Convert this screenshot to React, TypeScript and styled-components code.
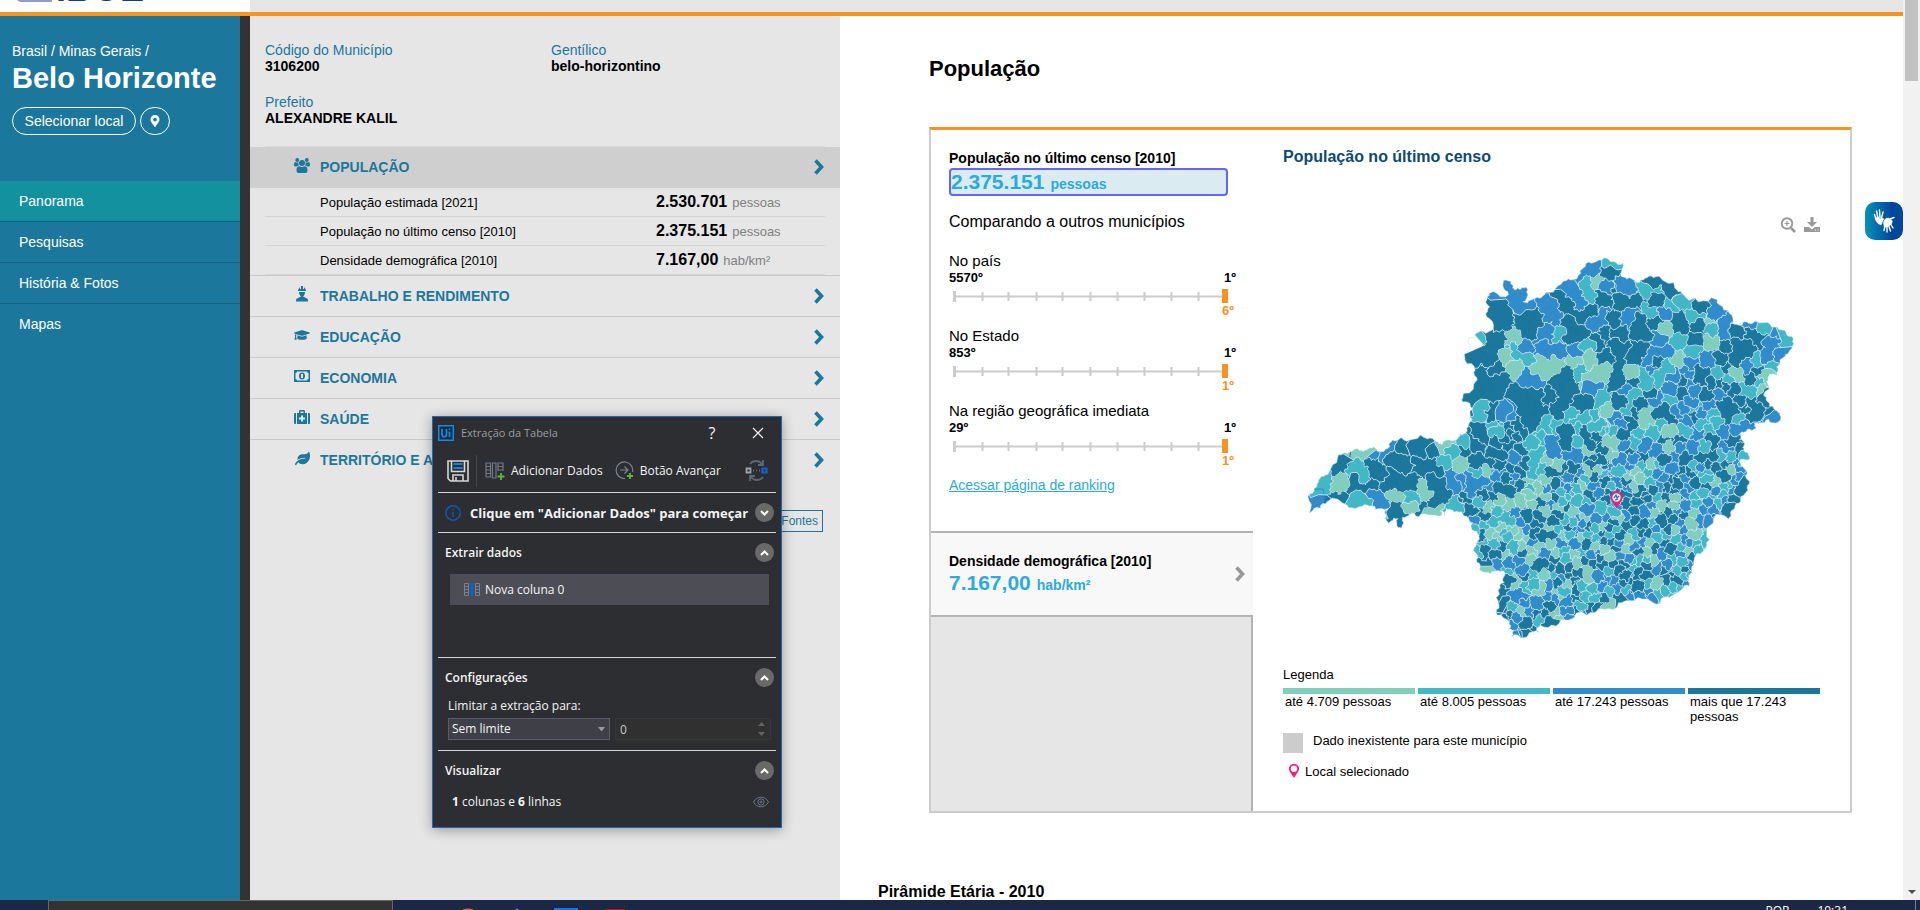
import React from "react";
import styled, { createGlobalStyle } from "styled-components";
import { FaGraduationCap, FaLeaf, FaMapMarkerAlt } from "react-icons/fa";

const GlobalStyle = createGlobalStyle`
  *, *::before, *::after { box-sizing: border-box; }
  body { margin: 0; font-family: "Liberation Sans", Arial, sans-serif; font-size: 14px; color: #000; background: #fff; }
  button, input, select { font: inherit; color: inherit; margin: 0; }
  h1, h2, h3, p, ul, dl, dd { margin: 0; padding: 0; }
  ul { list-style: none; }
  svg { display: block; flex: none; }
`;

const teal = "#1c779d";
const orange = "#f7931e";
const sky = "#29abe2";
const classColors = ["#80cebb", "#42b7c5", "#308cca", "#1c779d"];

/* ---------- Page frame ---------- */

const Screen = styled.div`
  display: flex;
  flex-direction: column;
  height: 100vh;
  overflow: hidden;
`;
const Viewport = styled.div`
  display: flex;
  flex: 1;
  min-height: 0;
`;
const Page = styled.div`
  position: relative;
  display: flex;
  flex: 1;
  flex-direction: column;
  min-width: 0;
`;
const TopBar = styled.header`
  display: flex;
  height: 16px;
  flex: none;
  background: #e6e6e6;
  border-bottom: 4px solid ${orange};
`;
const LogoBox = styled.div`
  display: flex;
  align-items: flex-end;
  gap: 4px;
  width: 250px;
  height: 12px;
  padding: 0 0 10px 17px;
  overflow: hidden;
  background: #fff;
`;
const LogoText = styled.span`
  font-size: 36px;
  line-height: 26px;
  font-weight: bold;
  color: #0b4182;
`;
const Columns = styled.div`
  display: flex;
  flex: 1;
  min-height: 0;
`;

/* ---------- Sidebar ---------- */

const Sidebar = styled.nav`
  width: 250px;
  flex: none;
  padding-top: 26px;
  color: #fff;
  background: ${teal};
  border-right: 10px solid #333;
`;
const Place = styled.div`
  padding: 0 12px;
  margin-bottom: 46px;
`;
const Crumbs = styled.p`
  line-height: 18px;
`;
const City = styled.h1`
  font-size: 29px;
  line-height: 36px;
  white-space: nowrap;
`;
const PlaceActions = styled.div`
  display: flex;
  gap: 4px;
  margin-top: 11px;
`;
const PillButton = styled.button<{ $round?: boolean }>`
  display: flex;
  align-items: center;
  justify-content: center;
  width: ${(p) => (p.$round ? "30px" : "124px")};
  height: 28px;
  padding: 0;
  color: #fff;
  white-space: nowrap;
  background: none;
  border: 1px solid #fff;
  border-radius: 14px;
`;
const MenuLink = styled.a<{ $active?: boolean }>`
  display: block;
  height: 41px;
  padding-left: 19px;
  line-height: 40px;
  color: #fff;
  text-decoration: none;
  background: ${(p) => (p.$active ? "#14919f" : "transparent")};
  border-bottom: 1px solid ${(p) => (p.$active ? "#125c7c" : "#155f80")};
  li:last-child > & { border-bottom: 0; }
`;

/* ---------- Indicator panel ---------- */

const Panel = styled.section`
  position: relative;
  width: 590px;
  flex: none;
  background: #e6e6e6;
`;
const Facts = styled.dl`
  display: grid;
  grid-template-columns: 286px 1fr;
  row-gap: 20px;
  margin: 0 15px;
  padding: 26px 0 20px;
  line-height: 16px;
  border-bottom: 1px solid #d9d9d9;
  dt { color: ${teal}; }
  dd { font-weight: bold; }
`;
const ThemeButton = styled.button<{ $open?: boolean; $last?: boolean }>`
  display: flex;
  align-items: center;
  width: 100%;
  height: 41px;
  padding: 0 16px 0 44px;
  font-weight: bold;
  text-align: left;
  color: ${teal};
  background: ${(p) => (p.$open ? "#cfcfcf" : "transparent")};
  border: 0;
  border-bottom: 1px solid ${(p) => (p.$open ? "#cfcfcf" : p.$last ? "transparent" : "#cacaca")};
`;
const ThemeIcon = styled.span`
  display: flex;
  width: 16px;
  margin-right: 10px;
  margin-bottom: 4px;
  justify-content: center;
`;
const ThemeName = styled.span`
  flex: 1;
`;
const Details = styled.ul`
  padding: 0 15px;
  border-bottom: 1px solid #cacaca;
`;
const DetailRow = styled.li`
  display: flex;
  align-items: center;
  height: 29px;
  padding-left: 55px;
  font-size: 13px;
  border-bottom: 1px solid #d4d4d4;
`;
const DetailName = styled.span`
  width: 336px;
`;
const DetailValue = styled.span`
  display: flex;
  align-items: baseline;
  gap: 5px;
  color: #808080;
  b { font-size: 16px; color: #000; }
`;
const SourceRow = styled.div`
  display: flex;
  justify-content: flex-end;
  padding: 29px 17px 0;
`;
const SourceButton = styled.button`
  height: 22px;
  padding: 0 4px 0 20px;
  font-size: 12px;
  color: ${teal};
  background: none;
  border: 1px solid ${teal};
`;

/* ---------- Main content ---------- */

const Main = styled.main`
  flex: 1;
  min-width: 0;
  padding: 40px 51px 0 38px;
  overflow: hidden;
  background: #fff;
`;
const SectionTitle = styled.h2`
  margin-left: 51px;
  font-size: 22px;
  line-height: 26px;
`;
const NextTitle = styled.h2`
  margin-top: 69px;
  font-size: 16px;
  line-height: 20px;
`;
const Card = styled.section`
  display: flex;
  margin: 45px 0 0 51px;
  border: 2px solid #ccc;
  border-top: 3px solid ${orange};
`;
const CardSide = styled.div`
  display: flex;
  flex-direction: column;
  width: 322px;
  flex: none;
`;
const Indicator = styled.div`
  padding: 19px 17px 39px 18px;
`;
const IndicatorName = styled.h3`
  font-size: 14px;
  line-height: 19px;
`;
const Amount = styled.p<{ $picked?: boolean }>`
  display: flex;
  align-items: baseline;
  gap: 6px;
  width: 279px;
  height: ${(p) => (p.$picked ? "28px" : "24px")};
  font-size: 14px;
  font-weight: bold;
  line-height: 24px;
  color: ${sky};
  background: ${(p) => (p.$picked ? "#dbebf2" : "transparent")};
  border: ${(p) => (p.$picked ? "2px solid #6565f8" : "0")};
  border-radius: 4px;
  b { font-size: 21px; line-height: 24px; }
`;
const Compare = styled.p`
  margin: 16px 0 20px;
  font-size: 16px;
  line-height: 20px;
`;
const Ranking = styled.div`
  margin-bottom: 9px;
  font-size: 13px;
`;
const RankingName = styled.p`
  font-size: 15px;
  line-height: 18px;
`;
const RankingEnds = styled.p`
  display: flex;
  justify-content: space-between;
  font-weight: bold;
  line-height: 16px;
`;
const RankingSpot = styled.p`
  padding: 1px 2px 0 0;
  text-align: right;
  font-weight: bold;
  line-height: 14px;
  color: ${orange};
`;
const RankingLink = styled.a`
  display: block;
  padding-top: 1px;
  line-height: 14px;
  color: ${sky};
`;
const OtherIndicator = styled.button`
  display: flex;
  align-items: center;
  justify-content: space-between;
  padding: 19px 8px 20px 18px;
  text-align: left;
  background: #f8f8f8;
  border: solid #b3b3b3;
  border-width: 2px 0;
`;
const OtherName = styled.span`
  display: block;
  font-weight: bold;
  line-height: 19px;
`;
const SideFill = styled.div`
  flex: 1;
  background: #e6e6e6;
  border-right: 2px solid #b3b3b3;
`;
const MapSide = styled.div`
  flex: 1;
  min-width: 0;
  padding: 18px 30px 31px;
`;
const MapTitle = styled.h3`
  font-size: 16px;
  line-height: 18px;
  color: #0d4a6f;
`;
const MapTools = styled.div`
  display: flex;
  justify-content: flex-end;
  gap: 8px;
  margin: 50px 0 16px;
`;
const ToolButton = styled.button`
  display: flex;
  align-items: center;
  justify-content: center;
  width: 16px;
  height: 18px;
  padding: 0;
  background: none;
  border: 0;
`;
const MapHolder = styled.div`
  padding-left: 17px;
`;
const Legend = styled.div`
  margin-top: 17px;
  font-size: 13px;
  line-height: 15px;
`;
const LegendScale = styled.ul`
  display: grid;
  grid-template-columns: repeat(4, 1fr);
  gap: 3px;
  margin: 6px 0 9px;
`;
const LegendClass = styled.li<{ $color: string }>`
  padding-left: 2px;
  border-top: 6px solid ${(p) => p.$color};
`;
const LegendLine = styled.p`
  display: flex;
  gap: 10px;
  min-height: 20px;
  margin-bottom: 9px;
`;
const LegendPin = styled.p`
  display: flex;
  align-items: center;
  gap: 6px;
  height: 18px;
  padding-left: 6px;
`;
const Swatch = styled.span`
  width: 20px;
  height: 20px;
  background: #ccc;
`;
const SignButton = styled.button`
  position: absolute;
  top: 202px;
  right: 0;
  display: flex;
  align-items: center;
  justify-content: center;
  width: 38px;
  height: 38px;
  padding: 0;
  border: 0;
  border-radius: 10px;
  background: linear-gradient(90deg, #0692b8, #00479b 70%);
`;

/* ---------- Browser scroll bar and task bar ---------- */

const ScrollBar = styled.div`
  display: flex;
  flex-direction: column;
  align-items: center;
  justify-content: space-between;
  width: 17px;
  flex: none;
  padding-bottom: 6px;
  background: #f1f1f1;
`;
const Thumb = styled.div`
  width: 13px;
  height: 81px;
  background: #c1c1c1;
`;
const TaskBar = styled.footer`
  display: flex;
  height: 10px;
  flex: none;
  overflow: hidden;
  color: #fff;
  background: #1a2745;
`;
const SearchBox = styled.div`
  width: 345px;
  margin-left: 48px;
  background: #333;
  border: 1px solid #666;
  border-bottom: 0;
`;
const TaskIcons = styled.div`
  flex: 1;
  padding-left: 67px;
`;
const Tray = styled.div`
  display: flex;
  gap: 28px;
  padding: 5px 67px 0 0;
  font: 12px/12px "Open Sans", "Noto Sans", sans-serif;
`;
const DesktopEdge = styled.div`
  width: 5px;
  border-left: 1px solid #77809a;
`;

/* ---------- Extraction dialog ---------- */

const Dialog = styled.section`
  position: absolute;
  top: 400px;
  left: 182px;
  z-index: 2;
  width: 350px;
  padding: 0 5px;
  font: 12px/16px "Open Sans", "Noto Sans", sans-serif;
  color: #f4f4f4;
  background: #2d2e32;
  border: 1px solid #1b69b8;
  box-shadow: 0 2px 12px rgba(0, 0, 0, 0.35);
`;
const DialogBar = styled.header`
  display: flex;
  align-items: center;
  height: 32px;
  margin-right: -5px;
  color: #9c9ca0;
`;
const DialogTitle = styled.span`
  flex: 1;
  padding-left: 7px;
  font-size: 11px;
`;
const PlainButton = styled.button<{ $width?: number }>`
  display: flex;
  align-items: center;
  justify-content: center;
  gap: 6px;
  width: ${(p) => (p.$width ? `${p.$width}px` : "auto")};
  height: 30px;
  padding: 0;
  white-space: nowrap;
  color: #f4f4f4;
  background: none;
  border: 0;
`;
const HelpButton = styled(PlainButton)`
  font-size: 16px;
`;
const DialogTools = styled.div`
  display: flex;
  align-items: center;
  height: 43px;
  padding: 0 8px 0 9px;
`;
const ToolDivider = styled.span`
  width: 1px;
  height: 32px;
  margin: 0 8px 0 7px;
  background: #45464b;
`;
const ToolSpacer = styled.span<{ $grow?: boolean }>`
  flex: ${(p) => (p.$grow ? "1" : "none")};
  width: 12px;
`;
const Block = styled.div<{ $height: number }>`
  min-height: ${(p) => p.$height}px;
  border-top: 1px solid #d4d4d4;
`;
const BlockHead = styled.div`
  display: flex;
  align-items: center;
  justify-content: space-between;
  height: 39px;
  padding: 0 2px 0 7px;
`;
const BlockTitle = styled.h3`
  font-size: 12px;
  font-weight: 600;
`;
const HintTitle = styled.h3`
  flex: 1;
  padding-left: 9px;
  font-size: 13px;
  font-weight: 700;
  white-space: nowrap;
`;
const FoldButton = styled.button`
  display: flex;
  align-items: center;
  justify-content: center;
  width: 19px;
  height: 19px;
  padding: 0;
  background: #696969;
  border: 0;
  border-radius: 50%;
`;
const ColumnItem = styled.div`
  display: flex;
  align-items: center;
  gap: 5px;
  height: 31px;
  margin: 2px 7px 0 12px;
  padding-left: 14px;
  background: #4d4d56;
`;
const LimitLabel = styled.label`
  display: block;
  margin: 1px 0 4px 10px;
`;
const LimitRow = styled.div`
  display: flex;
  gap: 5px;
  padding: 0 5px 0 10px;
`;
const SelectBox = styled.div`
  display: grid;
  align-items: center;
  width: 162px;
  > * { grid-area: 1 / 1; }
  > svg { justify-self: end; margin-right: 5px; pointer-events: none; }
`;
const Select = styled.select`
  width: 100%;
  height: 22px;
  padding: 0 3px;
  line-height: 16px;
  color: #f4f4f4;
  appearance: none;
  background: #3f4047;
  border: 1px solid #5c5d63;
  border-radius: 0;
`;
const SpinBox = styled.div`
  display: grid;
  align-items: center;
  flex: 1;
  > * { grid-area: 1 / 1; }
  > svg { justify-self: end; margin-right: 6px; }
`;
const SpinInput = styled.input`
  width: 100%;
  height: 22px;
  padding: 0 4px;
  color: #c8c8c8;
  background: #303030;
  border: 1px solid #36373a;
`;
const Preview = styled.div`
  display: flex;
  align-items: center;
  justify-content: space-between;
  height: 24px;
  padding: 0 7px 0 14px;
`;

/* ---------- Municipality map ---------- */

type Pt = [number, number];

/* The map is stored on two sheets, each with its own scale. */
const north = (x: number, y: number): Pt => [x / 2.412 - 30, y / 3 - 130];
const south = (x: number, y: number): Pt => [x / 2.8 - 10, y / 3 + 150];

const pairs = (flat: number[], to: (x: number, y: number) => Pt): Pt[] => {
  const out: Pt[] = [];
  for (let i = 0; i < flat.length; i += 2) out.push(to(flat[i], flat[i + 1]));
  return out;
};

const stateOutline: Pt[] = [
  ...pairs(
    [480, 910, 483, 885, 482, 850, 462, 840, 468, 820, 500, 780, 495, 750, 470, 720, 470, 700, 483, 678, 480, 655, 495, 642, 520, 640, 538, 628, 523, 590, 530, 560, 525, 530, 530, 520, 565, 530, 575, 525, 566, 510, 563, 485, 572, 482, 585, 495, 590, 510, 605, 508, 620, 505, 622, 525, 610, 545, 630, 540, 650, 535, 665, 518, 695, 497, 705, 487, 725, 480, 750, 460, 755, 445, 775, 430, 800, 420, 830, 425, 852, 430, 846, 465, 860, 477, 885, 488, 905, 475, 925, 473, 950, 483, 985, 515, 1000, 528, 1025, 535, 1065, 533, 1085, 555, 1108, 580, 1111, 612, 1130, 615, 1145, 605, 1165, 610, 1185, 608, 1210, 622, 1235, 630, 1245, 642, 1262, 655, 1264, 670, 1250, 700, 1240, 710, 1230, 725, 1222, 740, 1222, 765, 1205, 762, 1198, 785, 1190, 825, 1200, 845, 1215, 865, 1230, 880, 1232, 895],
    north
  ),
  ...pairs(
    [1368, 65, 1340, 58, 1315, 68, 1300, 70, 1305, 85, 1280, 88, 1265, 95, 1258, 120, 1272, 135, 1270, 150, 1283, 160, 1283, 180, 1260, 180, 1268, 200, 1280, 215, 1282, 240, 1280, 262, 1262, 290, 1252, 310, 1245, 325, 1235, 345, 1228, 357, 1185, 357, 1178, 375, 1175, 420, 1165, 440, 1155, 455, 1140, 460, 1130, 485, 1125, 515, 1115, 540, 1118, 558, 1095, 570, 1050, 590, 1015, 607, 1000, 597, 950, 603, 920, 608, 880, 628, 830, 645, 780, 660, 745, 678, 700, 675, 690, 690, 698, 700, 665, 708, 655, 713, 620, 710, 635, 690, 612, 688, 615, 665, 580, 645, 585, 615, 583, 570, 600, 548, 603, 520, 575, 513, 545, 517, 530, 490, 525, 465, 515, 445, 528, 420, 530, 405, 510, 390, 512, 368, 500, 355, 480, 335, 455, 330, 437, 325, 433, 348, 425, 330, 418, 348, 400, 345, 360, 350, 335, 345, 315, 352, 312, 385, 303, 383, 303, 355, 290, 355, 275, 370, 265, 355, 265, 335, 275, 325, 240, 328, 215, 315, 190, 322, 160, 315, 105, 305, 85, 325, 55, 338, 50, 290, 68, 265, 75, 260, 80, 240, 100, 225, 115, 205, 135, 165, 170, 155, 195, 152, 215, 150, 235, 140, 248, 155, 275, 145, 278, 130, 300, 122, 312, 113, 345, 118, 385, 117, 410, 125, 425, 135, 465, 120, 475, 103, 495, 95, 500, 75],
    south
  ),
];

/* Large municipalities: class, then the points that span each one. */
const northAreas: number[][] = [
  [3, 545, 550, 555, 580, 560, 605], [2, 595, 530, 615, 550, 575, 505], [3, 615, 590, 640, 595, 625, 635, 612, 615],
  [1, 500, 655], [3, 545, 650, 540, 690, 500, 700, 535, 725], [0, 588, 655], [1, 590, 697, 612, 712], [2, 615, 685],
  [2, 665, 640, 655, 660], [1, 703, 650], [2, 672, 555, 685, 590], [3, 695, 520, 715, 560, 745, 590, 775, 580],
  [2, 725, 500, 745, 550, 735, 520], [3, 725, 610, 750, 640, 725, 650], [2, 775, 445, 745, 475], [3, 822, 455, 832, 485],
  [1, 825, 432], [0, 788, 485], [1, 762, 490, 770, 530], [2, 850, 490, 860, 515], [2, 803, 500], [1, 905, 510, 930, 515],
  [3, 925, 483, 965, 505], [3, 795, 530, 800, 560], [3, 850, 545, 885, 548], [2, 805, 590, 785, 610], [3, 835, 600],
  [2, 875, 585, 860, 600], [1, 922, 575], [3, 935, 540], [2, 952, 572], [1, 970, 550], [1, 1000, 545], [3, 1040, 555, 1050, 540],
  [2, 1085, 565, 1080, 575], [3, 980, 600, 990, 620], [1, 1028, 590], [3, 1035, 625], [0, 1068, 607], [0, 1065, 657], [1, 1067, 630],
  [2, 1095, 610, 1095, 640], [3, 1125, 635], [3, 1160, 640, 1185, 655], [3, 1120, 680, 1145, 690, 1145, 710, 1120, 720],
  [2, 1215, 665, 1205, 710], [1, 1250, 670], [2, 1160, 613], [1, 1190, 628], [2, 1225, 640], [3, 1095, 680], [2, 1228, 710],
  [3, 1090, 720], [1, 1172, 728], [3, 490, 830, 515, 790, 540, 800, 560, 785, 510, 760], [3, 545, 740], [0, 572, 715], [0, 590, 745],
  [0, 645, 735, 670, 750, 695, 730], [2, 620, 770, 640, 790], [2, 655, 690, 690, 705, 705, 690], [2, 740, 690], [1, 770, 675],
  [0, 735, 725], [0, 773, 718], [3, 715, 760, 695, 790, 705, 830, 700, 870, 720, 800], [3, 600, 820, 640, 820, 620, 860, 650, 870, 630, 910],
  [3, 590, 920, 600, 950, 580, 940], [1, 505, 875], [2, 570, 880], [1, 542, 925], [3, 545, 885], [3, 505, 940, 515, 970], [3, 540, 975, 580, 980],
  [1, 748, 755], [0, 770, 785, 800, 755], [3, 805, 720], [3, 840, 680, 845, 720, 840, 780], [3, 890, 680, 880, 720, 900, 690],
  [2, 925, 705, 955, 690, 910, 725], [3, 840, 640], [3, 890, 610, 895, 645], [2, 940, 655], [0, 950, 630], [3, 930, 605], [1, 985, 665],
  [3, 1025, 660], [1, 1020, 695], [0, 983, 718], [1, 900, 760, 905, 790], [1, 940, 775, 955, 740], [0, 875, 755], [2, 780, 810],
  [1, 800, 830, 800, 860], [0, 820, 870], [1, 880, 825, 865, 870], [3, 845, 845], [3, 745, 860, 765, 850], [1, 735, 900, 770, 890],
  [1, 655, 950, 685, 915], [2, 830, 895], [1, 805, 925], [3, 870, 910, 850, 945], [0, 908, 880, 910, 905], [3, 935, 890, 965, 895, 950, 875],
  [2, 930, 835], [1, 965, 840], [3, 1045, 755, 1035, 780], [3, 1050, 820], [3, 995, 820], [2, 1005, 760], [2, 1055, 725], [2, 1018, 725],
  [0, 1120, 765], [2, 1155, 735], [3, 1155, 780], [1, 1145, 810, 1165, 812], [0, 1183, 810], [0, 1190, 770], [1, 1212, 745],
  [3, 1095, 850, 1105, 890, 1120, 870], [3, 1160, 850, 1165, 890, 1180, 870], [3, 1205, 880], [2, 1222, 892], [2, 1060, 860],
  [2, 1125, 930, 1150, 918], [1, 1045, 910], [2, 1005, 905], [3, 1025, 890], [2, 1085, 820], [3, 1080, 790], [3, 780, 670],
];
const southAreas: number[][] = [
  [3, 145, 185, 140, 210, 160, 175], [2, 75, 295, 70, 320], [1, 97, 252], [0, 135, 255], [1, 185, 200, 200, 225], [0, 187, 162], [2, 228, 160],
  [2, 268, 165], [3, 230, 190, 245, 215], [3, 180, 262, 225, 265], [3, 135, 295], [1, 195, 303], [2, 240, 295, 258, 315], [0, 290, 290],
  [3, 275, 230, 310, 250, 340, 260, 280, 260], [1, 342, 297], [0, 378, 278], [3, 320, 140], [3, 360, 150], [3, 400, 140], [3, 315, 185, 290, 180],
  [3, 360, 190, 390, 200, 410, 215], [3, 415, 250, 425, 285, 405, 310], [3, 295, 330, 308, 350, 308, 380], [0, 340, 325], [3, 378, 328], [0, 410, 330],
  [1, 435, 192], [1, 455, 160], [0, 440, 140], [0, 475, 190], [2, 452, 225, 460, 255], [2, 480, 245], [2, 500, 240, 525, 250, 510, 275, 545, 240],
  [1, 465, 315], [3, 490, 310, 510, 330], [3, 530, 345, 550, 345], [1, 485, 115], [3, 485, 160], [3, 515, 110, 530, 140], [3, 520, 185, 550, 195],
  [1, 575, 90], [2, 605, 40], [3, 605, 105, 640, 110, 620, 85], [3, 565, 145, 590, 160], [2, 625, 170], [3, 645, 148], [1, 672, 130], [1, 705, 95, 735, 75],
  [1, 695, 160, 685, 195, 678, 215], [2, 735, 130, 740, 165], [2, 785, 160, 805, 165], [3, 780, 90, 775, 125], [3, 830, 100, 840, 130], [1, 790, 50, 840, 50],
  [3, 725, 215, 755, 205], [3, 795, 205, 800, 240], [0, 720, 178], [0, 745, 188], [2, 590, 215, 575, 230], [2, 630, 235], [3, 580, 265, 610, 275],
  [0, 665, 245], [0, 690, 265], [0, 715, 240], [0, 560, 322], [0, 610, 315], [0, 650, 305], [1, 570, 365, 600, 350, 620, 365], [1, 595, 400], [0, 622, 390],
  [3, 660, 350], [3, 735, 400, 710, 410], [3, 535, 285, 500, 295], [2, 765, 250], [2, 718, 265], [3, 745, 292], [3, 705, 310], [0, 832, 152],
  [3, 845, 200, 870, 180], [3, 875, 150], [0, 895, 120, 910, 130], [0, 897, 165], [2, 925, 185], [2, 890, 212], [2, 935, 135], [1, 880, 85],
  [0, 950, 225, 985, 235], [0, 1015, 195], [2, 1020, 155, 1035, 145], [2, 1045, 235], [3, 1045, 180], [3, 1150, 175, 1185, 170], [2, 945, 262],
  [3, 995, 275], [0, 1078, 292], [3, 1222, 235, 1215, 225], [2, 1262, 230], [3, 1255, 270, 1262, 260], [3, 1225, 320, 1215, 345], [3, 1200, 345],
  [3, 945, 375], [3, 990, 375], [3, 880, 495, 865, 500], [3, 970, 565, 980, 560], [3, 810, 595], [2, 875, 560], [2, 915, 565], [1, 830, 590],
  [0, 830, 510, 835, 530], [2, 630, 595, 645, 580], [3, 595, 570], [3, 595, 440], [3, 650, 460], [2, 680, 430], [2, 755, 430], [3, 690, 500, 710, 490],
  [3, 545, 455], [3, 550, 495], [2, 615, 490], [3, 1265, 155], [2, 1240, 270], [3, 1075, 535, 1090, 540], [3, 595, 630], [3, 655, 700],
];

/* Repeatable noise, so that the map is the same on every render. */
const noise = (a: number, b: number) => {
  const v = Math.sin(a * 12.9898 + b * 78.233) * 43758.5453;
  return v - Math.floor(v);
};

/* Breaks a straight border into a ragged one, equal from either side. */
function ragged(a: Pt, b: Pt, depth: number, amount: number): Pt[] {
  const len = Math.hypot(b[0] - a[0], b[1] - a[1]);
  if (depth === 0 || len < 2) return [a];
  const mx = (a[0] + b[0]) / 2;
  const my = (a[1] + b[1]) / 2;
  const flip = a[0] < b[0] || (a[0] === b[0] && a[1] < b[1]) ? 1 : -1;
  const k = (noise(Math.round(mx * 20), Math.round(my * 20)) - 0.5) * amount * flip;
  const m: Pt = [mx - (b[1] - a[1]) * k, my + (b[0] - a[0]) * k];
  return [...ragged(a, m, depth - 1, amount), ...ragged(m, b, depth - 1, amount)];
}

const inside = (x: number, y: number) => {
  let hit = false;
  for (let i = 0, j = stateOutline.length - 1; i < stateOutline.length; j = i++) {
    const [xi, yi] = stateOutline[i];
    const [xj, yj] = stateOutline[j];
    if (yi > y !== yj > y && x < ((xj - xi) * (y - yi)) / (yj - yi) + xi) hit = !hit;
  }
  return hit;
};

interface Site { x: number; y: number; c: number; g: number; }
interface Corner { p: Pt; n: number; }

function makeSites(): Site[] {
  const sites: Site[] = [];
  let group = 0;
  const add = (areas: number[][], to: (x: number, y: number) => Pt) =>
    areas.forEach(([c, ...flat]) => {
      pairs(flat, to).forEach(([x, y]) => sites.push({ x, y, c, g: group }));
      group += 1;
    });
  add(northAreas, north);
  add(southAreas, south);
  for (let i = 0; i < 16000; i++) {
    const x = noise(i, 1.7) * 500;
    const y = noise(i, 9.3) * 390;
    const dense = x > 170 && y > 215;
    let gap = 21;
    if (dense) gap = x > 250 ? 6 : 7;
    else if (x > 330 && y > 110) gap = 8;
    else if (x > 270 && y > 170) gap = 8;
    else if (x > 225) gap = 12;
    gap *= 0.8 + noise(i, 6.2) * 0.8;
    if (!inside(x, y) || sites.some((s) => Math.hypot(s.x - x, s.y - y) < gap)) continue;
    const r = noise(i, 4.1) + (dense ? 0 : x < 225 ? 0.45 : 0.15);
    sites.push({ x, y, c: r < 0.19 ? 0 : r < 0.4 ? 1 : r < 0.68 ? 2 : 3, g: group });
    group += 1;
  }
  return sites;
}

function cellOf(i: number, sites: Site[]): Corner[] {
  const s = sites[i];
  let poly: Corner[] = [
    { p: [-20, -20], n: -1 }, { p: [540, -20], n: -1 }, { p: [540, 420], n: -1 }, { p: [-20, 420], n: -1 },
  ];
  const near = sites
    .map((t, j) => ({ j, d: Math.hypot(t.x - s.x, t.y - s.y) }))
    .filter((t) => t.j !== i && t.d < 110)
    .sort((a, b) => a.d - b.d);
  for (const { j, d } of near) {
    const reach = Math.max(...poly.map((v) => Math.hypot(v.p[0] - s.x, v.p[1] - s.y)));
    if (d > reach * 2) break;
    const t = sites[j];
    const nx = t.x - s.x;
    const ny = t.y - s.y;
    const lim = (t.x * t.x + t.y * t.y - s.x * s.x - s.y * s.y) / 2;
    const side = (p: Pt) => p[0] * nx + p[1] * ny - lim;
    const next: Corner[] = [];
    poly.forEach((v, k) => {
      const w = poly[(k + 1) % poly.length];
      const a = side(v.p);
      const b = side(w.p);
      const cut = (): Pt => [v.p[0] + ((w.p[0] - v.p[0]) * a) / (a - b), v.p[1] + ((w.p[1] - v.p[1]) * a) / (a - b)];
      if (a <= 0) next.push(v);
      if (a <= 0 && b > 0) next.push({ p: cut(), n: j });
      if (a > 0 && b <= 0) next.push({ p: cut(), n: v.n });
    });
    poly = next;
  }
  return poly;
}

const trace = (pts: Pt[]) => pts.map(([x, y]) => `${x.toFixed(1)} ${y.toFixed(1)}`).join("L");

function buildMap() {
  const sites = makeSites();
  const fills = ["", "", "", ""];
  let borders = "";
  sites.forEach((s, i) => {
    const poly = cellOf(i, sites);
    const ring: Pt[] = [];
    poly.forEach((v, k) => {
      const w = poly[(k + 1) % poly.length];
      const edge = ragged(v.p, w.p, 3, 0.8);
      ring.push(...edge);
      if (v.n > i && sites[v.n].g !== s.g) borders += `M${trace([...edge, w.p])}`;
    });
    if (ring.length) fills[s.c] += `M${trace(ring)}Z`;
  });
  const coast: Pt[] = [];
  stateOutline.forEach((p, k) => {
    coast.push(...ragged(p, stateOutline[(k + 1) % stateOutline.length], 2, 0.6));
  });
  return { fills, borders, coast: `M${trace(coast)}Z` };
}

const map = buildMap();

const MunicipalityMap = () => (
  <svg width="510" height="400" viewBox="0 0 510 400" role="img" aria-label="Mapa dos municípios de Minas Gerais">
    <clipPath id="state">
      <path d={map.coast} />
    </clipPath>
    <g clipPath="url(#state)">
      {map.fills.map((d, i) => (
        <path key={i} d={d} fill={classColors[i]} stroke={classColors[i]} strokeWidth="0.6" />
      ))}
      <path d={map.borders} fill="none" stroke="#d4ebf4" strokeWidth="0.9" strokeLinejoin="round" />
    </g>
    <path d={map.coast} fill="none" stroke="#bfe0ea" strokeWidth="0.5" />
    <g transform="translate(310 241)">
      <path d="M6.500 17.500 L1.500 9.500 A6 6 0 1 1 11.500 9.500 Z" fill="#f21c7c" />
      <circle cx="6.500" cy="6.500" r="4.200" fill="#d4ecf2" />
      <path d="M4 7l2-3 1 3 2-2M5 9l3-1" stroke="#1c779d" strokeWidth="1.200" fill="none" />
    </g>
  </svg>
);

/* ---------- Small drawings ---------- */

const Chevron = ({ color }: { color: string }) => (
  <svg width="10" height="16" viewBox="0 0 10 16" fill="none" stroke={color} strokeWidth="3.600">
    <path d="M1.500 1.500L7.500 8l-6 6.500" />
  </svg>
);
const PeopleIcon = () => (
  <svg width="16" height="15" viewBox="0 0 16 15" fill={teal}>
    <circle cx="8" cy="5" r="3" />
    <circle cx="3.200" cy="2" r="1.900" />
    <circle cx="12.800" cy="2" r="1.900" />
    <path d="M2.500 12c0-2.500 1-3.800 3-3.800 1.500 1 3.500 1 5 0 2 0 3 1.300 3 3.800 0 2-.5 3-2 3h-7c-1.500 0-2-1-2-3zM0 6.500C0 5 .5 4 1.500 4c1 .6 2 .6 3 .3C4.300 6 4.500 7 5 7.500c-1 0-1.700.3-2.300 1H1.500C.5 8.500 0 8 0 6.500zM16 6.500C16 5 15.500 4 14.500 4c-1 .6-2 .6-3 .3.2 1.700 0 2.700-.5 3.200 1 0 1.700.3 2.300 1h1.200c1 0 1.500-.5 1.500-2z" />
  </svg>
);
const WorkerIcon = () => (
  <svg width="14" height="16" viewBox="0 0 14 16" fill={teal}>
    <path d="M6 0h2v3h1V1l2 3v1H3V4l2-3v2h1zM4 6h6c0 2-1 4-2 4.500L9 11l3 1.500c1 .6 1 1.500 1 3H1c0-1.500 0-2.400 1-3L5 11l1-.5C5 10 4 8 4 6z" />
  </svg>
);
const MoneyIcon = () => (
  <svg width="16" height="12" viewBox="0 0 16 12">
    <path fillRule="evenodd" fill={teal} d="M0 0h16v12H0zM3 1.500C3 2.500 2 3 1.500 3v6C2.500 9 3 10 3 10.500h10C13 9.500 14 9 14.500 9V3C13.500 3 13 2 13 1.500z" />
    <path fillRule="evenodd" fill={teal} d="M8 2.500c2 0 3 1.500 3 3.500S10 9.500 8 9.500 5 8 5 6s1-3.500 3-3.500zM7 4v4h2V4z" />
  </svg>
);
const KitIcon = () => (
  <svg width="16" height="15" viewBox="0 0 16 15" fill={teal}>
    <path d="M2 3v11H1.500C.5 14 0 13.500 0 12.500v-8C0 3.500.5 3 1.500 3zM14 3h.5c1 0 1.500.5 1.500 1.500v8c0 1-.5 1.500-1.500 1.500H14z" />
    <path fillRule="evenodd" d="M5 3V1.500C5 .5 5.500 0 6.500 0h3c1 0 1.500.5 1.500 1.500V3h2v11H3V3zM6.500 1.500V3h3V1.500zM7 5.500v2H5v2h2v2h2v-2h2v-2H9v-2z" />
  </svg>
);
const ZoomIcon = () => (
  <svg width="16" height="16" viewBox="0 0 16 16" fill="none" stroke="#999">
    <circle cx="7" cy="6.500" r="5.300" strokeWidth="1.900" />
    <path d="M11 11l4 4" strokeWidth="2.600" />
    <path d="M7 4v5M4.500 6.500h5" strokeWidth="1.200" />
  </svg>
);
const DownloadIcon = () => (
  <svg width="16" height="16" viewBox="0 0 16 16" fill="#999">
    <path d="M6.500 0h3v5H13l-5 5-5-5h3.500z" />
    <path fillRule="evenodd" d="M0 10h5l3 2.500L11 10h5v5H0zM11 12.500v1h1v-1zM13.500 12.500v1h1v-1z" />
  </svg>
);
const SignIcon = () => (
  <svg width="22" height="24" viewBox="0 0 22 24" stroke="#fff" strokeLinecap="round" strokeWidth="1.400">
    <path d="M2 9c1 4 3 6 6 7l1-2 1-3 1-1-2-1-2 1-2-2z" fill="#fff" strokeWidth="0.500" />
    <path d="M3 10L1.500 5.500M5 9L3.500 2M7 9L6.500 1M8.500 9L10 3" fill="none" />
    <path d="M10.500 14c0-3 2-5 5-5l4 3-1 3-4 3-3 0z" fill="#fff" strokeWidth="0.500" />
    <path d="M17 10l4-1.500M12 17l-1 4.500M14 17l0 6M15.500 16l2 6M17 14l3 5" fill="none" />
  </svg>
);
const Pin = () => (
  <svg width="10" height="14" viewBox="0 0 10 14">
    <path fillRule="evenodd" fill="#f21c7c" d="M5 14L.800 7.500a5 5 0 1 1 8.400 0zM5 1.600a3.200 3.200 0 1 0 0 6.500 3.200 3.200 0 0 0 0-6.500z" />
  </svg>
);
const UiMark = () => (
  <svg width="16" height="16" viewBox="0 0 16 16" fill="none" stroke="#0e8fe8">
    <rect x="0.750" y="0.750" width="14.500" height="14.500" fill="#12293f" strokeWidth="1.500" />
    <path d="M4 4v5.500c0 3 4.500 3 4.500 0V4M11.500 6.500V12M11.500 3.500V5" strokeWidth="1.700" />
  </svg>
);
const CloseIcon = () => (
  <svg width="12" height="12" viewBox="0 0 12 12" stroke="#eee" strokeWidth="1.200">
    <path d="M1 1l10 10M11 1L1 11" />
  </svg>
);
const SaveIcon = () => (
  <svg width="22" height="22" viewBox="0 0 22 22" fill="none" stroke="#d6d6d6" strokeWidth="1.600">
    <path d="M1 1h20v20H3.500L1 18.500zM4.500 1v10.500h13V1M6 21v-6h10v6M9 17v4" />
    <path d="M6.500 4h9M6.500 8h9" stroke="#0e84dc" strokeWidth="2" />
  </svg>
);
const TableAddIcon = () => (
  <svg width="20" height="18" viewBox="0 0 20 18" fill="none" stroke="#6f7a83" strokeWidth="1.200">
    <path d="M1 1h4.500v14H1zM7.500 1h3.500v15H7.500zM13 9V1h5v8M1 4.500h4.500M1 8h4.500M1 11.500h4.500M13 4.500h5M13 8h5" />
    <path d="M16 11v7M12.500 14.500h7" stroke="#5cb83c" strokeWidth="1.800" />
  </svg>
);
const NextAddIcon = () => (
  <svg width="19" height="19" viewBox="0 0 19 19" fill="none" stroke="#7a858e" strokeWidth="1.200">
    <path d="M10 17.500A8.300 8.300 0 1 1 17.500 11M5 9h8M9.500 5.500L13 9l-3.500 3.500" />
    <path d="M15 12v6M12 15h6" stroke="#5cb83c" strokeWidth="1.800" />
  </svg>
);
const SwapIcon = () => (
  <svg width="23" height="21" viewBox="0 0 23 21" fill="none" stroke="#5c6872" strokeWidth="1.800">
    <path d="M5 4c3-4 9-4 12 0M18 0v5h-5M18 17c-3 4-9 4-12 0M5 21v-5h5" />
    <path d="M1.500 8.500h4v4h-4z" stroke="#9aa4ab" />
    <path d="M8 10.500h1M11 10.500h1M14 10.500h1" />
    <path d="M17.500 8.500h4v4h-4z" stroke="#0b62d6" strokeWidth="2.200" />
  </svg>
);
const InfoIcon = () => (
  <svg width="16" height="16" viewBox="0 0 16 16" fill="none" stroke="#0b5cc8" strokeWidth="1.400">
    <circle cx="8" cy="8" r="7.200" />
    <path d="M8 4v1.500M8 7v5" />
  </svg>
);
const ColumnIcon = () => (
  <svg width="16" height="13" viewBox="0 0 16 13" fill="none" stroke="#78818a">
    <path d="M.5.500h4v12h-4zM11.500.500h4v12h-4zM.5 3.500h4M.5 6.500h4M.5 9.500h4M11.500 3.500h4M11.500 6.500h4M11.500 9.500h4" />
    <path d="M8 0v13" stroke="#0b62d6" strokeWidth="3" />
  </svg>
);
const Fold = ({ down }: { down?: boolean }) => (
  <FoldButton type="button" aria-label={down ? "Expandir" : "Recolher"}>
    <svg width="9" height="6" viewBox="0 0 9 6" fill="none" stroke="#fff" strokeWidth="2">
      <path d={down ? "M1 1l3.500 3.500L8 1" : "M1 5l3.500-3.500L8 5"} />
    </svg>
  </FoldButton>
);
const EyeIcon = () => (
  <svg width="16" height="12" viewBox="0 0 16 12" fill="none" stroke="#6a7580">
    <path d="M.5 6C4-.5 12-.5 15.500 6 12 12.500 4 12.500.5 6z" />
    <circle cx="8" cy="6" r="3.200" />
    <circle cx="8" cy="6" r="1" />
  </svg>
);

/* ---------- Sections ---------- */

const themes = [
  { name: "TRABALHO E RENDIMENTO", icon: <WorkerIcon /> },
  { name: "EDUCAÇÃO", icon: <FaGraduationCap size={16} /> },
  { name: "ECONOMIA", icon: <MoneyIcon /> },
  { name: "SAÚDE", icon: <KitIcon /> },
  { name: "TERRITÓRIO E AMBIENTE", icon: <FaLeaf size={15} /> },
];
const details = [
  ["População estimada [2021]", "2.530.701", "pessoas"],
  ["População no último censo [2010]", "2.375.151", "pessoas"],
  ["Densidade demográfica [2010]", "7.167,00", "hab/km²"],
];
const rankings = [
  ["No país", "5570º", "6º"],
  ["No Estado", "853º", "1º"],
  ["Na região geográfica imediata", "29º", "1º"],
];
const legend = ["até 4.709 pessoas", "até 8.005 pessoas", "até 17.243 pessoas", "mais que 17.243 pessoas"];
const menu = ["Panorama", "Pesquisas", "História & Fotos", "Mapas"];

const RankingTrack = () => (
  <svg width="287" height="17" viewBox="0 0 287 17">
    <path d="M4 10.500h270" stroke="#ccc" strokeWidth="2" />
    <path d="M33.500 6v9M59.500 6v9M87.500 6v9M113.500 6v9M141.500 6v9M168.500 6v9M195.500 6v9M222.500 6v9M249.500 6v9" stroke="#ccc" strokeWidth="2" />
    <path d="M5.500 5v11" stroke="#ccc" strokeWidth="3" />
    <path d="M276 3v14" stroke={orange} strokeWidth="6" />
  </svg>
);

const ExtractionDialog = () => (
  <Dialog role="dialog" aria-label="Extração da Tabela">
    <DialogBar>
      <UiMark />
      <DialogTitle>Extração da Tabela</DialogTitle>
      <HelpButton type="button" $width={46}>?</HelpButton>
      <PlainButton type="button" aria-label="Fechar" $width={46}><CloseIcon /></PlainButton>
    </DialogBar>
    <DialogTools>
      <PlainButton type="button" aria-label="Salvar"><SaveIcon /></PlainButton>
      <ToolDivider />
      <PlainButton type="button"><TableAddIcon />Adicionar Dados</PlainButton>
      <ToolSpacer />
      <PlainButton type="button"><NextAddIcon />Botão Avançar</PlainButton>
      <ToolSpacer $grow />
      <PlainButton type="button" aria-label="Indicar"><SwapIcon /></PlainButton>
    </DialogTools>
    <Block $height={40}>
      <BlockHead>
        <InfoIcon />
        <HintTitle>Clique em "Adicionar Dados" para começar</HintTitle>
        <Fold down />
      </BlockHead>
    </Block>
    <Block $height={125}>
      <BlockHead><BlockTitle>Extrair dados</BlockTitle><Fold /></BlockHead>
      <ColumnItem><ColumnIcon />Nova coluna 0</ColumnItem>
    </Block>
    <Block $height={93}>
      <BlockHead><BlockTitle>Configurações</BlockTitle><Fold /></BlockHead>
      <LimitLabel htmlFor="limit">Limitar a extração para:</LimitLabel>
      <LimitRow>
        <SelectBox>
          <Select id="limit"><option>Sem limite</option></Select>
          <svg width="7" height="5" viewBox="0 0 7 5" fill="#9a9a9a"><path d="M0 0h7L3.500 4.500z" /></svg>
        </SelectBox>
        <SpinBox>
          <SpinInput type="text" aria-label="Limite" defaultValue="0" disabled />
          <svg width="7" height="14" viewBox="0 0 7 14" fill="#626266"><path d="M0 4h7L3.500 0zM0 10h7l-3.500 4z" /></svg>
        </SpinBox>
      </LimitRow>
    </Block>
    <Block $height={77}>
      <BlockHead><BlockTitle>Visualizar</BlockTitle><Fold /></BlockHead>
      <Preview>
        <span><b>1</b> colunas e <b>6</b> linhas</span>
        <EyeIcon />
      </Preview>
    </Block>
  </Dialog>
);

export default function App() {
  return (
    <Screen>
      <GlobalStyle />
      <Viewport>
        <Page>
          <TopBar>
            <LogoBox>
              <svg width="35" height="10" viewBox="0 0 35 10"><path d="M0 0h35v10H3L0 8z" fill="#8f9bcb" /></svg>
              <LogoText>IBGE</LogoText>
            </LogoBox>
          </TopBar>
          <Columns>
            <Sidebar>
              <Place>
                <Crumbs>Brasil / Minas Gerais /</Crumbs>
                <City>Belo Horizonte</City>
                <PlaceActions>
                  <PillButton type="button">Selecionar local</PillButton>
                  <PillButton type="button" $round aria-label="Minha localização"><FaMapMarkerAlt size={12} /></PillButton>
                </PlaceActions>
              </Place>
              <ul>
                {menu.map((m, i) => (
                  <li key={m}><MenuLink href="#" $active={i === 0}>{m}</MenuLink></li>
                ))}
              </ul>
            </Sidebar>
            <Panel>
              <Facts>
                <div><dt>Código do Município</dt><dd>3106200</dd></div>
                <div><dt>Gentílico</dt><dd>belo-horizontino</dd></div>
                <div><dt>Prefeito</dt><dd>ALEXANDRE KALIL</dd></div>
              </Facts>
              <ThemeButton type="button" $open>
                <ThemeIcon><PeopleIcon /></ThemeIcon>
                <ThemeName>POPULAÇÃO</ThemeName>
                <Chevron color={teal} />
              </ThemeButton>
              <Details>
                {details.map(([name, value, unit]) => (
                  <DetailRow key={name}>
                    <DetailName>{name}</DetailName>
                    <DetailValue><b>{value}</b> {unit}</DetailValue>
                  </DetailRow>
                ))}
              </Details>
              {themes.map((t, i) => (
                <ThemeButton type="button" key={t.name} $last={i === themes.length - 1}>
                  <ThemeIcon>{t.icon}</ThemeIcon>
                  <ThemeName>{t.name}</ThemeName>
                  <Chevron color={teal} />
                </ThemeButton>
              ))}
              <SourceRow><SourceButton type="button">Fontes</SourceButton></SourceRow>
              <ExtractionDialog />
            </Panel>
            <Main>
              <SectionTitle>População</SectionTitle>
              <Card>
                <CardSide>
                  <Indicator>
                    <IndicatorName>População no último censo [2010]</IndicatorName>
                    <Amount $picked><b>2.375.151</b> pessoas</Amount>
                    <Compare>Comparando a outros municípios</Compare>
                    {rankings.map(([name, last, spot]) => (
                      <Ranking key={name}>
                        <RankingName>{name}</RankingName>
                        <RankingEnds><span>{last}</span><span>1º</span></RankingEnds>
                        <RankingTrack />
                        <RankingSpot>{spot}</RankingSpot>
                      </Ranking>
                    ))}
                    <RankingLink href="#">Acessar página de ranking</RankingLink>
                  </Indicator>
                  <OtherIndicator type="button">
                    <div>
                      <OtherName>Densidade demográfica [2010]</OtherName>
                      <Amount as="span"><b>7.167,00</b> hab/km²</Amount>
                    </div>
                    <Chevron color="#999" />
                  </OtherIndicator>
                  <SideFill />
                </CardSide>
                <MapSide>
                  <MapTitle>População no último censo</MapTitle>
                  <MapTools>
                    <ToolButton type="button" aria-label="Ampliar"><ZoomIcon /></ToolButton>
                    <ToolButton type="button" aria-label="Baixar"><DownloadIcon /></ToolButton>
                  </MapTools>
                  <MapHolder><MunicipalityMap /></MapHolder>
                  <Legend>
                    <p>Legenda</p>
                    <LegendScale>
                      {legend.map((l, i) => (
                        <LegendClass key={l} $color={classColors[i]}>{l}</LegendClass>
                      ))}
                    </LegendScale>
                    <LegendLine><Swatch />Dado inexistente para este município</LegendLine>
                    <LegendPin><Pin />Local selecionado</LegendPin>
                  </Legend>
                </MapSide>
              </Card>
              <NextTitle>Pirâmide Etária - 2010</NextTitle>
            </Main>
          </Columns>
          <SignButton type="button" aria-label="Tradução em Libras"><SignIcon /></SignButton>
        </Page>
        <ScrollBar>
          <Thumb />
          <svg width="8" height="4" viewBox="0 0 8 4" fill="#505050"><path d="M0 0h8L4 4z" /></svg>
        </ScrollBar>
      </Viewport>
      <TaskBar>
        <SearchBox />
        <TaskIcons>
          <svg width="170" height="10" viewBox="0 0 170 10">
            <path d="M2 10c2-2 10-2 12 0z" fill="#d85a4a" />
            <circle cx="57" cy="10" r="1.500" fill="#8a80e0" />
            <path d="M94 8h24v2H94z" fill="#1176e8" />
            <path d="M145 9h20v1h-20z" fill="#b01818" />
          </svg>
        </TaskIcons>
        <Tray><span>POR</span><span>10:31</span></Tray>
        <DesktopEdge />
      </TaskBar>
    </Screen>
  );
}
